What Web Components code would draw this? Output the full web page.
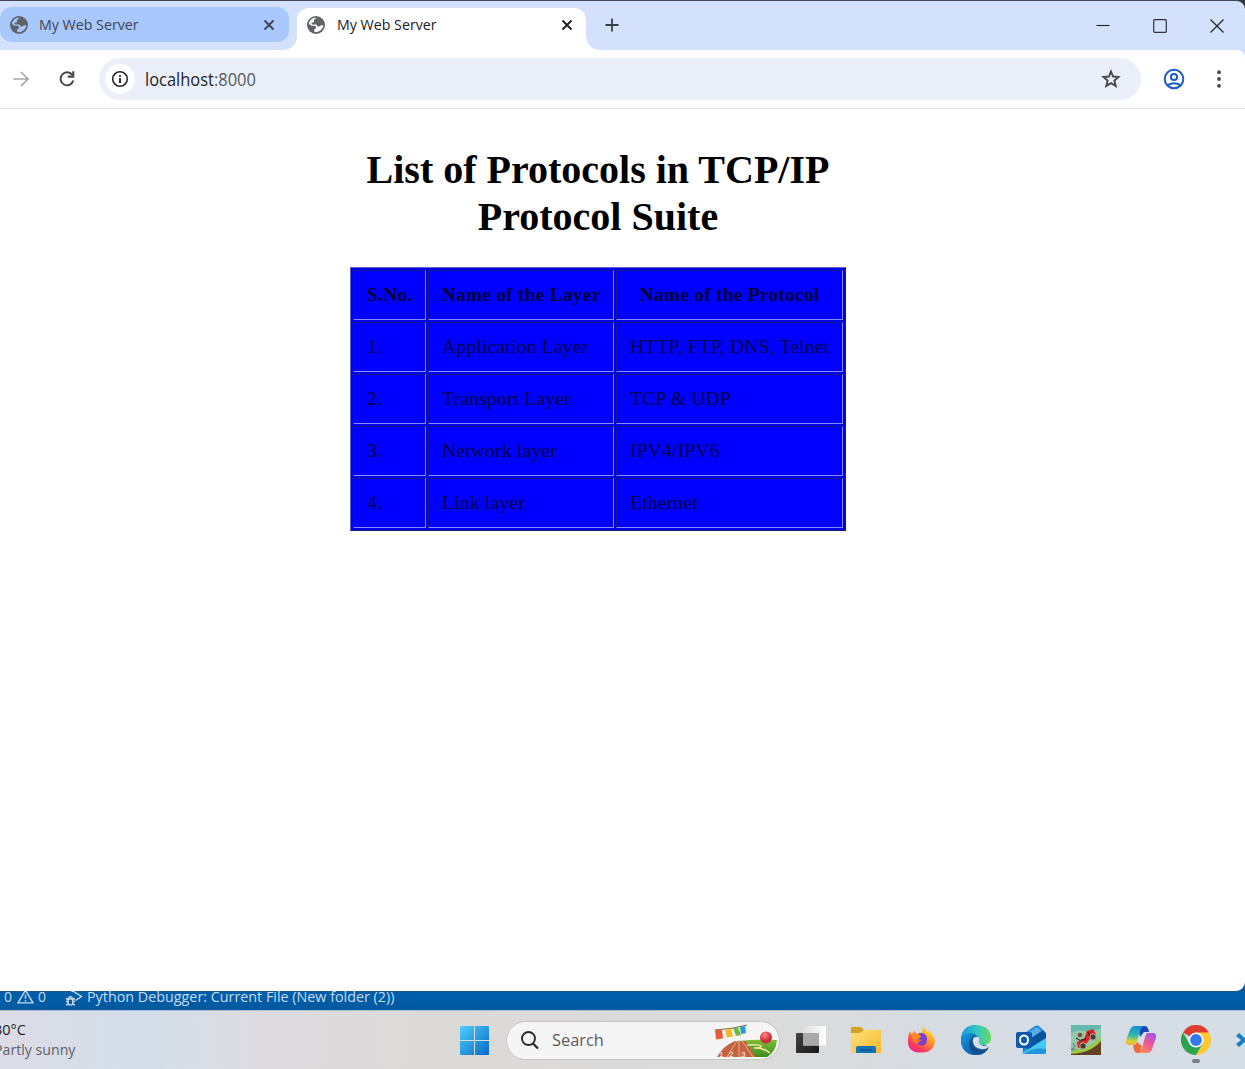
<!DOCTYPE html>
<html lang="en"><head><meta charset="utf-8"><title>My Web Server</title>
<style>html,body{margin:0;width:1245px;height:1069px;overflow:hidden;background:#fff}</style></head>
<body><desktop-screen></desktop-screen>
<script>
const define=(name,html,ready)=>customElements.define(name,class extends HTMLElement{
  constructor(){super();this.attachShadow({mode:'open'});const t=document.createElement('template');t.innerHTML=html;this.shadowRoot.append(t.content.cloneNode(true));}
  connectedCallback(){if(ready)ready.call(this,this.shadowRoot);}
});

/* label whose glyphs are condensed to the width given in the w attribute */
define('ui-text',`<style>:host{display:block;flex:none;font-family:"Open Sans","Noto Sans",sans-serif;white-space:nowrap}span{display:inline-block;transform-origin:0 50%}</style><span><slot></slot></span>`,
function(r){const s=r.querySelector('span'),w=+this.getAttribute('w');this.style.width=w+'px';
  const fit=()=>{s.style.transform='none';const n=s.offsetWidth;if(n)s.style.transform=`scaleX(${w/n})`};fit();document.fonts.ready.then(fit);});

const icons={
globe:['0 0 18 18',`<circle cx="9" cy="9" r="9" fill="#5f6368"/><path d="M10.2 1.9c-1.7 0-2 1-3.1 1.8-.8.7.3 1.4-.2 2.2-.7.8-2 .2-2.4 1.2-.3 1 .5 1.5 1.7 1.5h2.5c1.3 0 1.5.8 1.5 1.9h1.8c1.2 0 1.4-1.2 2.5-1.2h1.9c-.3 3.2-2.8 6-6 6.7-1.5.3-2.6.1-3.2-.2v-1.7c.2-1.7 1.9-.9 1.9-2.6 0-1.2-.9-1.7-2-1.7H4.7L1.9 7.9c.4-3.3 3-5.8 6.2-6.1z" fill="var(--hole,#fff)"/>`],
close:['0 0 12 12',`<path d="M1.5 1.500l9 9m0-9l-9 9" stroke="currentColor" stroke-width="1.900"/>`],
plus:['0 0 14 14',`<path d="M7 .5v13M.5 7h13" stroke="#3b3e43" stroke-width="1.800"/>`],
forward:['0 0 16 16',`<path d="M.5 8h14M8 1l7 7-7 7" fill="none" stroke="#a5a7aa" stroke-width="1.700"/>`],
reload:['0 0 18 18',`<path d="M14.300 5A6.500 6.500 0 1 0 15.300 10.500" fill="none" stroke="#46484b" stroke-width="1.900"/><path d="M16.300 1.200v6.500H9.800V5.600h4.400V1.200z" fill="#46484b"/>`],
info:['0 0 18 18',`<circle cx="9" cy="9" r="7.300" fill="none" stroke="#27292c" stroke-width="1.600"/><path d="M9 8v5M9 5v1.800" stroke="#27292c" stroke-width="1.900"/>`],
star:['0 0 20 20',`<path d="M10 2.500l2.100 5 5.400.5-4.100 3.600 1.300 5.300-4.700-2.800-4.700 2.800 1.300-5.300L2.500 8l5.400-.5z" fill="none" stroke="#46484b" stroke-width="1.900"/>`],
user:['0 0 22 22',`<g fill="none" stroke="#1c5bc9" stroke-width="2"><circle cx="11" cy="11" r="9.300"/><circle cx="11" cy="9" r="3.100"/><path d="M4.500 17.300q6.500-4.300 13 0"/></g>`],
dots:['0 0 6 20',`<g fill="#444649"><circle cx="3" cy="3.200" r="1.900"/><circle cx="3" cy="10" r="1.900"/><circle cx="3" cy="16.800" r="1.900"/></g>`],
min:['0 0 14 14',`<path d="M.5 6.500h13" stroke="#222" stroke-width="1.100"/>`],
max:['0 0 14 14',`<rect x=".7" y=".7" width="12.600" height="12.600" rx="1" fill="none" stroke="#30343c" stroke-width="1.200"/>`],
wclose:['0 0 14 14',`<path d="M.5.5l13 13m0-13l-13 13" stroke="#222" stroke-width="1.200"/>`],
warn:['0 0 16 14',`<path d="M8 1l7 12H1z" fill="none" stroke="#c5dbed" stroke-width="1.300"/><path d="M8 5v4.200m0 1v1.400" stroke="#c5dbed" stroke-width="1.300"/>`],
debug:['0 0 18 18',`<g fill="none" stroke="#c5dbed" stroke-width="1.400"><path d="M7 3V1.500L16.500 7.500 10.500 11.500"/><path d="M3.200 10h4.600v3.800a2.300 2.300 0 0 1-4.600 0zM3.700 9.500a1.800 1.800 0 0 1 3.600 0M1 12.500h2M8 12.500h2M1 16l2.200-1M10 16l-2.200-1M1 9.500l2 1M10 9.500l-2 1"/></g>`],
windows:['0 0 29 29',`<defs><linearGradient id="a" gradientUnits="userSpaceOnUse" x2="29" y2="29"><stop stop-color="#4fd0fb"/><stop offset="1" stop-color="#0569c8"/></linearGradient></defs><path d="M1 0h13v14H0V1q0-1 1-1zM15 0h13q1 0 1 1v13H15zM0 15h14v14H1q-1 0-1-1zM15 15h14v13q0 1-1 1H15z" fill="url(#a)"/>`],
search:['0 0 18 18',`<circle cx="7.500" cy="7.500" r="6.500" fill="none" stroke="#292a2c" stroke-width="1.900"/><path d="M12 12.500l5 5" stroke="#292a2c" stroke-width="2.300"/>`],
sport:['0 0 64 36',`<defs><linearGradient id="g" y2="1" x2="0"><stop stop-color="#81bd38"/><stop offset="1" stop-color="#3b8c20"/></linearGradient><radialGradient id="r" cx=".4" cy=".3"><stop stop-color="#ff8b83"/><stop offset="1" stop-color="#c92d38"/></radialGradient></defs>
<path d="M1 6Q19 5 33 1" fill="none" stroke="#78674d"/><path d="M1 6l7-.5 1 9-7 1z" fill="#e85f38"/><path d="M11 5.300l6-.8 2 8-6 1z" fill="#f4b92c"/><path d="M19 4l5-1 3 8-5 1z" fill="#73b842"/><path d="M26 3l5-1 1 7-5 1z" fill="#289bd2"/>
<path d="M23 17q20-2 40-1-1 12-10 17H31z" fill="url(#g)"/><path d="M21 17l10 0 11 16H3q6-11 18-16z" fill="#c4633f"/><path d="M23 17L13 33M25 17v16M28 17l11 16" stroke="#f3c3a5" stroke-width=".8"/><path d="M33 21q13-1 14 1t-7 2q11 0 16 5" fill="none" stroke="#eee3a0" stroke-width="1.600"/><circle cx="52" cy="13.500" r="6" fill="url(#r)"/><g fill="#fff" font-family="Liberation Sans" font-size="8"><text x="5" y="32.500">1</text><text x="15" y="32.500">2</text><text x="27" y="32.500">3</text></g>`],
tasks:['0 0 30 30',`<defs><linearGradient id="b" x2="1" y2="1"><stop stop-color="#444"/><stop offset="1" stop-color="#181818"/></linearGradient><linearGradient id="w" x2="1"><stop stop-color="#ddd"/><stop offset="1" stop-color="#fff"/></linearGradient></defs><rect y="8" width="23" height="20" rx="1" fill="url(#b)"/><rect x="7" y="1" width="23" height="19.500" rx="1" fill="url(#w)"/><path d="M7 8h16v12.500H7z" fill="#a9a9a9"/>`],
folder:['0 0 30 30',`<defs><linearGradient id="f" x2="1" y2="1"><stop stop-color="#ffe17a"/><stop offset="1" stop-color="#f7b92c"/></linearGradient></defs><path d="M0 3q0-1 1-1h9l3 3-3 4H0z" fill="#d5a021"/><path d="M0 8h9l4-3h17v23H0z" fill="url(#f)"/><path d="M5 28v-5q0-2 2-2h16q2 0 2 2v5z" fill="#1671b8"/><path d="M9 25h12" stroke="#064f8b" stroke-width="1.300"/>`],
firefox:['0 0 30 30',`<defs><linearGradient id="x" x1=".9" y1="0" x2=".2" y2="1"><stop stop-color="#fff044"/><stop offset=".4" stop-color="#ff9b28"/><stop offset=".75" stop-color="#ff4056"/><stop offset="1" stop-color="#e91e8c"/></linearGradient></defs><path d="M3 6l2 3 3-4 2 4q3-2 6-2l1-6q4 2 5 6l1-2q6 4 7 10 0 13-14 13.500Q1 29 1 16 1 10 3 6z" fill="url(#x)"/><path d="M9 12q3-6 9-4 5 3 3 9t-8 3q-3-1-4-4 4 2 7-1l-5-1z" fill="#7940cb"/><path d="M5 9q6-3 10 2-1 3-5 3 0 3 3 4-6 1-7-4z" fill="#ff8a25"/>`],
edge:['0 0 30 30',`<defs><linearGradient id="e" x2="1"><stop stop-color="#1596d5"/><stop offset=".5" stop-color="#31c5ca"/><stop offset="1" stop-color="#69da5c"/></linearGradient><linearGradient id="d" y2="1"><stop stop-color="#1598d9"/><stop offset="1" stop-color="#0650a7"/></linearGradient></defs><path d="M0 15A15 15 0 0 1 15 0l6 19 7 3A15 15 0 0 1 0 15z" fill="#0b62b1"/><path d="M0 14Q1 0 15 0q15 1 15 13 0 7-8 7-5 0-6-2 3-2 1-6-6-8-17 2z" fill="url(#e)"/><path d="M0 13q6-7 14-3-7 5-3 13 3 6 9 6-9 3-15-2T0 13z" fill="url(#d)"/><path d="M12 16q-1 8 7 9 5 0 9-3-3 7-11 8-9-3-9-10 0-6 5-9z" fill="#124d8d"/><path d="M14 12q5-1 4 4-1 2 2 4 4 2 8 1l0 1q-4 3-8 2-7-1-8-7-1-4 2-5z" fill="#d9dfe5"/>`],
outlook:['0 0 30 30',`<path d="M6 10L19 1q2-1 4 0l7 7v19q0 2-2 2H7z" fill="#1689d6"/><path d="M6 11L21 2l5 4-17 12z" fill="#58a9e6"/><path d="M8 18L27 5l3 4v5L12 25z" fill="#0753a2"/><path d="M6 28l24-15v14q0 2-2 2H8z" fill="#43c9ef"/><path d="M8 29q9-7 22-5v3q0 2-2 2z" fill="#2196db"/><rect y="7" width="16" height="16" rx="2" fill="#0d59ad"/><ellipse cx="8" cy="15" rx="4" ry="4.600" fill="none" stroke="#fff" stroke-width="2"/>`],
game:['0 0 30 30',`<path fill="#66b9b0" d="M0 0h30v30H0z"/><path d="M0 8q7-4 14-2t16-3v10L14 24H0z" fill="#92c8a6"/><path d="M0 28q20-2 30-14v16H0z" fill="#63401f"/><path d="M0 25q18-1 30-13v4Q20 28 0 29z" fill="#9bc94a"/><path d="M6 17l7-3 3-8 6-2 3 5-7 6-5 7-6 1z" fill="#d82424"/><path d="M10 15l5-1M17 7l3 6" stroke="#6e1111" stroke-width="1.500"/><circle cx="9" cy="10" r="2.300" fill="#765334"/><path d="M5 13l5 3" stroke="#333" stroke-width="1.200"/><g fill="#4a3a36" stroke="#b5b5a2"><circle cx="12" cy="21" r="3.200"/><circle cx="22" cy="12" r="3.200"/></g><path d="M1 26l3-6m-4 3l5 2M2 18l2 3" stroke="#6a9088" stroke-width="1.300"/>`],
copilot:['0 0 30 30',`<defs><linearGradient id="p" x1=".4" x2=".3" y2="1"><stop stop-color="#1690dd"/><stop offset=".5" stop-color="#36b9a5"/><stop offset=".8" stop-color="#d8d33c"/><stop offset="1" stop-color="#f3a832"/></linearGradient><linearGradient id="q" x1=".7" x2=".2" y2="1"><stop stop-color="#a653e3"/><stop offset=".5" stop-color="#ef5a94"/><stop offset="1" stop-color="#fb9159"/></linearGradient></defs><path d="M12 1h7q3 0 4 6h-5l-4 5z" fill="#1648b8"/><path d="M9 1h9q-3 1-4 5l-3 10q-1 4-5 4H3q-4 0-3-5L4 5q1-4 5-4z" fill="url(#p)"/><path d="M7 20q3 0 4-3l5 4-2 7h-3q-3 0-4-8z" fill="#ef6c39"/><path d="M21 8h6q4 0 3 5l-4 11q-1 4-5 4h-9q3-1 4-5l3-11q1-3 2-4z" fill="url(#q)"/>`],
chrome:['0 0 30 30',`<path d="M15 15L2 7.500a15 15 0 0 1 26 0z" fill="#df3b30"/><path d="M15 15V7.500h13A15 15 0 0 1 15 30l6.500-11z" fill="#fdc934"/><path d="M2 7.500l6.500 11.200L21.500 19 15 30A15 15 0 0 1 2 7.500z" fill="#2ba24c"/><circle cx="15" cy="15" r="7.500" fill="#fff"/><circle cx="15" cy="15" r="5.900" fill="#3478ea"/>`],
code:['0 0 30 30',`<path d="M0 11l3-3 7 6L22 2l7 4v18l-7 4-12-12-7 6-3-3 5-4z" fill="#1681c7"/>`]
};
customElements.define('ui-icon',class extends HTMLElement{
  constructor(){super();this.attachShadow({mode:'open'})}
  connectedCallback(){const [box,body]=icons[this.getAttribute('name')],w=this.getAttribute('w'),h=this.getAttribute('h')||w;
  this.shadowRoot.innerHTML=`<style>:host{display:block;flex:none;width:${w}px;height:${h}px}svg{display:block}</style><svg width="${w}" height="${h}" viewBox="${box}" fill="none">${body}</svg>`}
});

define('browser-tab',`<style>:host{display:flex;align-items:center;box-sizing:border-box;height:35px;width:289px;padding:0 14px 0 10px;border-radius:12px;background:#a8c7fa;color:#3e4654;--hole:#a8c7fa}
:host([active]){position:relative;height:42px;margin:1px 0 0 8px;padding:0 13px 8px 10px;border-radius:12px 12px 0 0;background:#fff;color:#1f2023;--hole:#fff}
ui-text{margin-left:11px;font-size:14.500px;line-height:20px}:host([active]) ui-text{margin-left:12px}.x{margin-left:auto}
:host([active])::before,:host([active])::after{content:"";position:absolute;bottom:0;width:13px;height:13px;background:radial-gradient(circle at 0 0,transparent 12.500px,#fff 13px)}
:host([active])::before{left:-13px}:host([active])::after{right:-13px;background:radial-gradient(circle at 100% 0,transparent 12.500px,#fff 13px)}</style>
<ui-icon name="globe" w="18"></ui-icon><ui-text w="100"><slot></slot></ui-text><ui-icon class="x" name="close" w="12"></ui-icon>`);

define('tab-strip',`<style>:host{display:flex;box-sizing:border-box;height:50px;padding-top:6px;background:#d3e1fd;border-top:1px solid #414756;border-radius:0 9px 0 0}
browser-tab[active]{height:42px}.new{margin:11px 0 0 19px}.ctl{display:flex;gap:43px;margin:12px 21px 0 auto}</style>
<browser-tab>My Web Server</browser-tab><browser-tab active>My Web Server</browser-tab><ui-icon class="new" name="plus" w="14"></ui-icon>
<div class="ctl"><ui-icon name="min" w="14"></ui-icon><ui-icon name="max" w="14"></ui-icon><ui-icon name="wclose" w="14"></ui-icon></div>`);

define('address-bar',`<style>:host{display:flex;align-items:center;box-sizing:border-box;height:59px;background:#fff;border-bottom:1px solid #dedfe1;border-radius:0 8px 0 0;padding-left:13px}
.r{margin-left:29px}.omni{display:flex;align-items:center;box-sizing:border-box;width:1042px;height:42px;margin-left:23px;padding:0 20px 0 6px;border-radius:21px;background:#ebeff9}
.badge{display:flex;align-items:center;justify-content:center;width:30px;height:30px;border-radius:15px;background:#fff}ui-text{margin-left:10px;font-size:17.500px;line-height:24px;color:#23262a}.s{margin-left:auto}.u{margin-left:22px}.d{margin-left:31px}i{font-style:normal;color:#55585e}</style>
<ui-icon name="forward" w="16"></ui-icon><ui-icon class="r" name="reload" w="18"></ui-icon>
<div class="omni"><span class="badge"><ui-icon name="info" w="18"></ui-icon></span><ui-text w="111">localhost<i>:8000</i></ui-text><ui-icon class="s" name="star" w="20"></ui-icon></div>
<ui-icon class="u" name="user" w="22"></ui-icon><ui-icon class="d" name="dots" w="6" h="20"></ui-icon>`);

define('protocol-table',`<style>:host{display:block;width:496px}
table{table-layout:fixed;width:496px;border-collapse:separate;border-spacing:2px;border:1px solid;border-color:#6161d2 #1a1a78 #1a1a78 #6161d2;background:#0000ea;color:#000048;font:19.500px/24px "Liberation Serif",serif;letter-spacing:.22px}
td,th{box-sizing:border-box;height:50px;padding:0 0 1px 13px;border:1px solid;border-color:#17178a #8b8bf5 #8b8bf5 #17178a;background:#00f;text-align:left;white-space:nowrap}th{padding:0 0 1px;text-align:center;color:#000038}</style>
<table><colgroup><col style="width:73px"><col style="width:186px"><col style="width:227px"></colgroup><tbody></tbody></table>`,
function(r){const rows=[['S.No.','Name of the Layer','Name of the Protocol'],['1.','Application Layer','HTTP, FTP, DNS, Telnet'],['2.','Transport Layer','TCP &amp; UDP'],['3.','Network layer','IPV4/IPV6'],['4.','Link layer','Ethernet']];
r.querySelector('tbody').innerHTML=rows.map((x,i)=>'<tr>'+x.map(c=>i?`<td>${c}</td>`:`<th>${c}</th>`).join('')+'</tr>').join('')});

define('web-page',`<style>:host{display:flex;flex-direction:column;align-items:center;box-sizing:border-box;width:496px;margin-left:350px;padding-top:37px}
h1{margin:0 0 27px;font:bold 40px/47px "Liberation Serif",serif;text-align:center;color:#000}</style><h1>List of Protocols in TCP/IP Protocol Suite</h1><protocol-table></protocol-table>`);

define('browser-window',`<style>:host{display:flex;flex-direction:column;height:991px;background:linear-gradient(#30323a 0 12px,#d3e1fd 12px 70px,#005ca8 70px)}main{flex:1;background:#fff;border-radius:0 0 9px 0}</style>
<tab-strip></tab-strip><address-bar></address-bar><main><web-page></web-page></main>`);

define('status-bar',`<style>:host{display:flex;box-sizing:border-box;height:19px;overflow:hidden;background:linear-gradient(#1b5785 0 1px,#005fa9 1px,#0059a1);color:#c5dbed;font-size:14px;padding-left:4px}
ui-text{margin-top:-5px;line-height:22px}.w{margin:-2px 4px 0 5px}.d{margin:-2px 4px 0 19px}</style>
<ui-text w="8">0</ui-text><ui-icon class="w" name="warn" w="17" h="15"></ui-icon><ui-text w="8">0</ui-text><ui-icon class="d" name="debug" w="18"></ui-icon><ui-text w="308">Python Debugger: Current File (New folder (2))</ui-text>`);

define('task-bar',`<style>:host{display:flex;align-items:center;box-sizing:border-box;height:59px;overflow:hidden;border-top:1px solid #a9bfd0;background:linear-gradient(90deg,#dcdce5 0,#d3dee9 140px,#dbdce3 230px,#ded9dc 300px,#dcdad9 430px,#dbdbdb 780px,#d5dce3 980px,#d5dde5)}
.weather{width:460px;flex:none;font-size:14.500px;line-height:20px;color:#202124;margin-top:-1px}.weather ui-text{margin-left:-6px}.weather .g{color:#606268}
.pill{display:flex;align-items:center;box-sizing:border-box;flex:none;width:274px;height:39px;margin:0 3px 0 17px;padding:0 1px 0 14px;border:1px solid #c5c5c7;border-radius:20px;background:#f5f5f6}
.pill ui-text{margin-left:13px;font-size:17px;line-height:24px;color:#5a5a5c}.pill .s{margin-left:auto}
.pill .s{margin-top:3px}
.app{position:relative;flex:none;width:55px;display:flex;justify-content:center}.run::after{content:"";position:absolute;top:34px;width:8px;height:4px;border-radius:2px;background:#7b7f84}</style>
<div class="weather"><ui-text w="32">30°C</ui-text><ui-text class="g" w="81">Partly sunny</ui-text></div><ui-icon name="windows" w="29"></ui-icon>
<div class="pill"><ui-icon name="search" w="18"></ui-icon><ui-text w="52">Search</ui-text><ui-icon class="s" name="sport" w="64" h="36"></ui-icon></div>
${['tasks','folder','firefox','edge','outlook','game','copilot','chrome','code'].map(n=>`<div class="app ${n==='chrome'?'run':''}"><ui-icon name="${n}" w="${n==='firefox'?28:30}"></ui-icon></div>`).join('')}`);

define('desktop-screen',`<style>:host{display:flex;flex-direction:column;width:1245px;height:1069px;overflow:hidden}</style><browser-window></browser-window><status-bar></status-bar><task-bar></task-bar>`);
</script></body></html>
